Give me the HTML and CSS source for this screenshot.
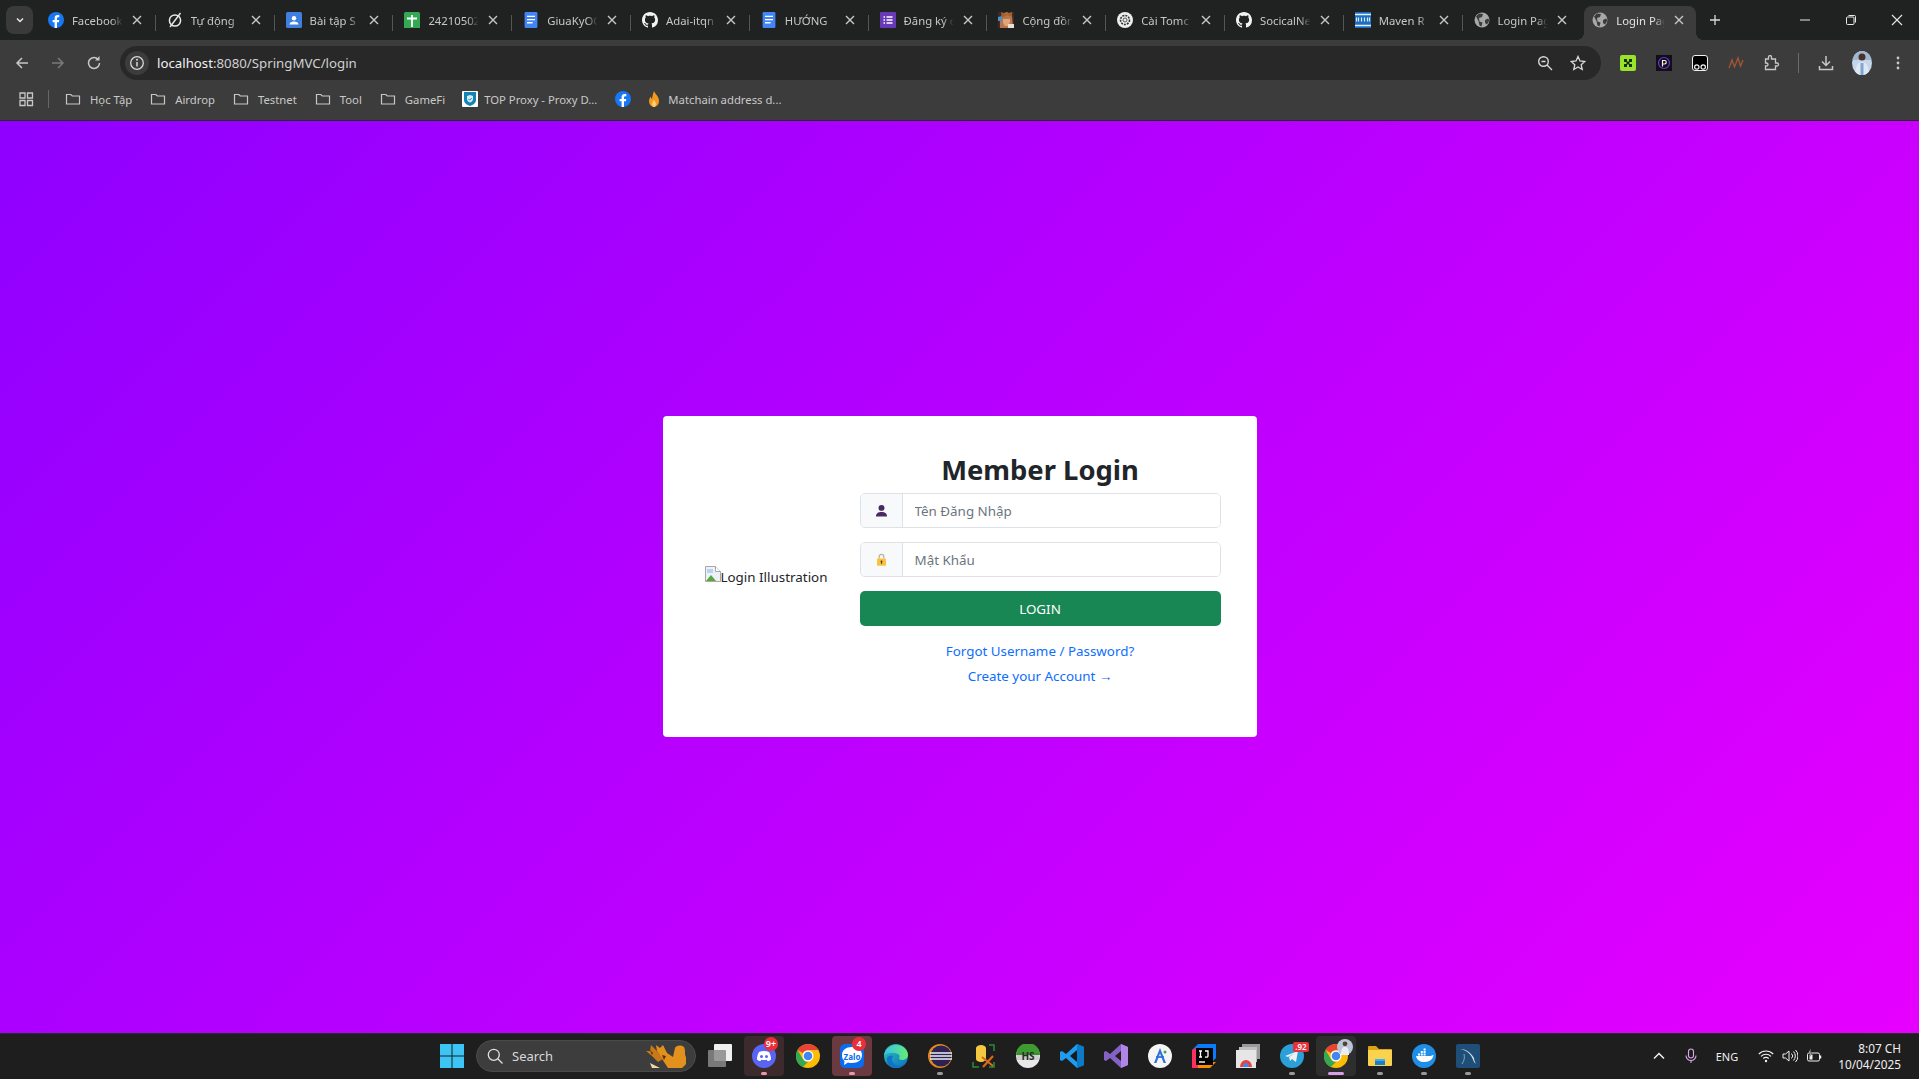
FILE: index.html
```html
<!DOCTYPE html>
<html lang="vi">
<head>
<meta charset="utf-8">
<title>Login Page</title>
<link rel="stylesheet" href="styles.css">
</head>
<body>
<svg class="defs" aria-hidden="true">
  <defs>
    <symbol id="x" viewBox="0 0 12 12"><path d="M2 2l8 8M10 2l-8 8" stroke="#c7c7c7" stroke-width="1.4" fill="none"/></symbol>
    <symbol id="fb" viewBox="0 0 16 16"><circle cx="8" cy="8" r="8" fill="#1877f2"/><path d="M10.9 10.3l.4-2.3H9V6.5c0-.7.3-1.3 1.3-1.3h1V3.2S10.400 3 9.600 3C7.800 3 6.600 4.100 6.600 6.100V8H4.600v2.300h2V16h2.400v-5.700z" fill="#fff"/></symbol>
    <symbol id="slash" viewBox="0 0 16 16"><circle cx="8" cy="8.500" r="5.600" fill="none" stroke="#e8e8e8" stroke-width="1.500"/><path d="M3 15L13.500 1" stroke="#e8e8e8" stroke-width="1.400"/></symbol>
    <symbol id="contacts" viewBox="0 0 16 16"><rect width="16" height="16" rx="1.500" fill="#3f7fe0"/><circle cx="8" cy="6.300" r="2.200" fill="#fff"/><path d="M3.500 12.500c0-2 2-3 4.500-3s4.500 1 4.500 3z" fill="#fff"/></symbol>
    <symbol id="sheets" viewBox="0 0 16 16"><rect width="16" height="18" rx="1.500" fill="#34a853"/><path d="M8 3v12M3 6.500h10" stroke="#fff" stroke-width="1.800"/></symbol>
    <symbol id="docs" viewBox="0 0 16 20"><rect width="16" height="20" rx="1.500" fill="#4285f4"/><path d="M3 5.500h10M3 9.500h10M3 13.500h7" stroke="#fff" stroke-width="1.800"/></symbol>
    <symbol id="gh" viewBox="0 0 16 16"><path fill="#f2f2f2" d="M8 0C3.580 0 0 3.580 0 8c0 3.540 2.290 6.530 5.470 7.590.400.070.550-.170.550-.380 0-.190-.010-.820-.010-1.490-2.010.370-2.530-.490-2.690-.940-.090-.230-.480-.940-.820-1.130-.280-.150-.680-.520-.010-.530.630-.010 1.080.580 1.230.820.720 1.210 1.870.870 2.330.660.070-.520.280-.870.510-1.070-1.780-.200-3.640-.890-3.640-3.950 0-.870.310-1.590.820-2.150-.080-.200-.360-1.020.080-2.120 0 0 .670-.210 2.200.820.640-.180 1.320-.270 2-.270.680 0 1.360.090 2 .270 1.530-1.040 2.200-.820 2.200-.820.440 1.100.160 1.920.080 2.120.510.560.820 1.270.820 2.150 0 3.070-1.870 3.750-3.650 3.950.290.250.540.730.540 1.480 0 1.070-.010 1.930-.010 2.200 0 .210.150.460.550.380A8.013 8.013 0 0016 8c0-4.420-3.580-8-8-8z"/></symbol>
    <symbol id="forms" viewBox="0 0 16 16"><rect width="16" height="16" rx="1" fill="#673ab7"/><path d="M6.500 5h6M6.500 8h6M6.500 11h6M3.500 5h1.500M3.500 8h1.500M3.500 11h1.500" stroke="#fff" stroke-width="1.600"/></symbol>
    <symbol id="game" viewBox="0 0 16 16"><rect width="16" height="16" fill="#3a2a2a"/><path d="M2 16V8l2-6 5-2 5 3 1 13z" fill="#b9764e"/><path d="M3 0l5 2 6-2v5L9 3 4 6z" fill="#a8612d"/><path d="M0 5l4-1v5H0z" fill="#4a90c2"/><path d="M5 7h7v3l-2 4H7L5 11z" fill="#e0a679"/><path d="M10 12h6v4h-6z" fill="#e8e0d8"/></symbol>
    <symbol id="tom" viewBox="0 0 16 16"><circle cx="8" cy="8" r="8" fill="#eee"/><circle cx="8" cy="8" r="4.500" fill="none" stroke="#333" stroke-width="1.600" stroke-dasharray="2 1"/><circle cx="8" cy="8" r="2" fill="none" stroke="#555" stroke-width="1"/></symbol>
    <symbol id="mvn" viewBox="0 0 16 16"><rect width="16" height="16" fill="#1b6fc2"/><path d="M0 2.500h16M0 13.500h16" stroke="#e8f0f8" stroke-width="1.400"/><path d="M1.500 5.500v4M3.500 5.500v4M6.500 5.500v4M9.500 5.500v4M12.500 5.500v4M14.500 5.500v4" stroke="#dfeaf5" stroke-width="1.200"/></symbol>
    <symbol id="globe" viewBox="0 0 16 16"><circle cx="8" cy="8" r="7.500" fill="#a8a8a8"/><path d="M2 4.500l3-3 4 .5-1 3-3 1 .5 3.500 3 1-1 4-2-1-1-4.500zM11 8l3-1.500 1.500 2-2.500 4-2-1.500z" fill="#3c3c3c"/></symbol>
    <symbol id="folder" viewBox="0 0 16 16"><path d="M1.500 3.500h4.300l1.500 1.500h7.200v8h-13z" fill="none" stroke="#c7c7c7" stroke-width="1.200"/></symbol>
    <symbol id="proxy" viewBox="0 0 16 16"><rect width="16" height="16" rx="1" fill="#fff"/><path d="M2 1h12v8c0 3-3 5-6 6-3-1-6-3-6-6z" fill="#1483b5"/><path d="M8 4l3 1v3c0 2-1.500 3-3 3.500C6.500 11 5 10 5 8V5z" fill="#d8eef7"/><path d="M6.500 8l1.200 1.200 2-2.200" stroke="#1483b5" fill="none"/></symbol>
    <symbol id="flame" viewBox="0 0 16 16"><path d="M8 0c1 3 5 5 5 10 0 3.500-2.500 6-5 6s-5-2.500-5-6c0-2 1-3.500 2-4.500 0 1.500.5 2 1 2.500C6.500 5 7 2.500 8 0z" fill="#f39a1e"/><path d="M8 9c1 1.500 2 2.500 2 4 0 1.500-1 3-2 3s-2-1.500-2-3c0-1.500 1-2.500 2-4z" fill="#fbd07a"/></symbol>

    <symbol id="win" viewBox="0 0 24 24"><path d="M0 0h11.500v11.500H0zM12.500 0H24v11.500H12.500zM0 12.500h11.500V24H0zM12.500 12.500H24V24H12.500z" fill="#3cc4f5"/></symbol>
    <symbol id="fox" viewBox="0 0 40 26"><path d="M38 4c-4-3-8-1-9 1l-2 9-6-4-4-8-3 3-4-3 1 6 7 11 4 6h14c4-3 7-7 4-11-2-3 0-6-2-10z" fill="#e2911c"/><path d="M10 7l-5-5-1 6-4 0 6 5 6 6 5-3z" fill="#c9781a"/><path d="M4 20l10 5H6z" fill="#f0d8a8"/><path d="M16 12l4 1-2 4zM4 7l3 3-1 2z" fill="#5a3208"/></symbol>
    <symbol id="taskview" viewBox="0 0 24 24"><rect x="6" y="0" width="18" height="17" rx="1" fill="#f0f0f0"/><rect x="0" y="6" width="18" height="17" rx="1" fill="#8a8a8a" fill-opacity=".85"/></symbol>
    <symbol id="discord" viewBox="0 0 24 24"><circle cx="12" cy="12" r="12" fill="#5865f2"/><path d="M7 8c3-1.500 7-1.500 10 0 1.500 2.500 2 5 2 7.500-1.200 1-2.500 1.500-3.500 1.500l-.8-1.300c-1.800.5-3.600.5-5.400 0L8.500 17c-1 0-2.300-.5-3.500-1.500C5 13 5.500 10.500 7 8z" fill="#fff"/><circle cx="9.500" cy="12.500" r="1.500" fill="#5865f2"/><circle cx="14.500" cy="12.500" r="1.500" fill="#5865f2"/></symbol>
    <symbol id="chrome" viewBox="0 0 24 24"><circle cx="12" cy="12" r="12" fill="#fbbc04"/><path d="M12 0a12 12 0 0110.400 6H12a6 6 0 00-5.200 3L1.600 6A12 12 0 0112 0z" fill="#ea4335"/><path d="M1.600 6l5.200 9A6 6 0 0012 18l-5.200 5A12 12 0 011.600 6z" fill="#34a853"/><circle cx="12" cy="12" r="5.500" fill="#fff"/><circle cx="12" cy="12" r="4.300" fill="#4285f4"/></symbol>
    <symbol id="zalo" viewBox="0 0 24 24"><rect width="24" height="24" rx="5" fill="#0a6cf0"/><path d="M12 3c6 0 10 3 10 8s-4 8-10 8c-1.500 0-3 0-4-.500L4 21l.5-4C2.500 15.500 2 13.500 2 11c0-5 4-8 10-8z" fill="#fff"/></symbol>
    <symbol id="edge" viewBox="0 0 24 24"><defs><linearGradient id="eg" x1="0" y1="0" x2="1" y2="1"><stop offset="0" stop-color="#2fc7b0"/><stop offset="1" stop-color="#0c6fc4"/></linearGradient><linearGradient id="eg2" x1="0" y1="0" x2="1" y2="0"><stop offset="0" stop-color="#35c1f1"/><stop offset="1" stop-color="#66eb6e"/></linearGradient></defs><circle cx="12" cy="12" r="12" fill="url(#eg)"/><path d="M0 12C1 5 6 1 12 1c6 0 12 4 12 10 0 3-3 5-6 5-2 0-3-1-3-2 1-1 1-3-1-4C9 8 3 8 0 12z" fill="url(#eg2)"/><path d="M24 15c-2 6-7 9-12 9-6 0-10-4-9-10 1-2 4-3 6-2-2 3-1 7 3 9 4 2 9 0 12-6z" fill="#1174c9"/></symbol>
    <symbol id="eclipse" viewBox="0 0 24 24"><circle cx="12" cy="12" r="12" fill="#e08a1e"/><circle cx="13" cy="12" r="10.500" fill="#2c2255"/><path d="M2 9h22M2 12h22M2 15h22" stroke="#f0f0f0" stroke-width="1.500"/></symbol>
    <symbol id="xampp" viewBox="0 0 24 24"><path d="M4 4a5 3 0 0110 0v11a5 3 0 01-10 0z" fill="#f5c842"/><path d="M17 1h5v6M1 18v5h6M17 23h5v-5" stroke="#2e8b3a" stroke-width="1.500" fill="none"/><path d="M10 13l11 9M21 12L11 23" stroke="#d9691a" stroke-width="2.200"/></symbol>
    <symbol id="hs" viewBox="0 0 24 24"><circle cx="12" cy="12" r="12" fill="#e8e8e8"/><path d="M0 11a12 12 0 0124 0z" fill="#3e9b2f"/><path d="M1 9h22v7H1z" fill="#3c3c3c" fill-opacity=".15"/></symbol>
    <symbol id="vscode" viewBox="0 0 24 24"><path d="M17 0l7 3v18l-7 3L6 14l-4 3-2-1V8l2-1 4 3z" fill="#1f9cf0"/><path d="M17 6l-7 6 7 6z" fill="#1a1a1a"/><path d="M17 0l7 3v18l-7 3z" fill="#0a7bc8"/></symbol>
    <symbol id="vs" viewBox="0 0 24 24"><path d="M17 0l7 3v18l-7 3L6 14l-4 3-2-1V8l2-1 4 3z" fill="#8661c5"/><path d="M17 7l-6 5 6 5z" fill="#1f1f1f"/><path d="M17 0l7 3v18l-7 3z" fill="#b085e8"/></symbol>
    <symbol id="astudio" viewBox="0 0 24 24"><circle cx="12" cy="12" r="12" fill="#f5f5f5"/><path d="M12 4l6 15h-2.400l-3.600-9.500L8.400 19H6z" fill="#2f6fe0"/><path d="M8 13h8" stroke="#2f6fe0" stroke-width="1.800"/><circle cx="17" cy="8" r="1.500" fill="#3aa757"/></symbol>
    <symbol id="idea" viewBox="0 0 24 24"><path d="M6 0h18v14l-4 4H0V6z" fill="#087cfa"/><path d="M0 6l6-3v21H0z" fill="#fe315d"/><path d="M18 24H6v-6h18z" fill="#fd8c00"/><rect x="4" y="4" width="17" height="17" fill="#000"/><path d="M7 18h6" stroke="#fff" stroke-width="1.400"/><path d="M7 7h3M8.500 7v6M7 13h3M13 7h3v5c0 1-1 1.500-3 1" stroke="#fff" stroke-width="1.300" fill="none"/></symbol>
    <symbol id="capps" viewBox="0 0 24 24"><rect x="6" y="0" width="18" height="15" fill="#9a9a9a"/><rect x="3" y="3" width="18" height="15" fill="#c0c0c0"/><rect x="0" y="6" width="20" height="18" fill="#e6e6e6"/><path d="M4 23a6 7 0 0112 0z" fill="#ea4335"/><path d="M7 23a3 4 0 016 0z" fill="#4285f4"/></symbol>
    <symbol id="tele" viewBox="0 0 24 24"><circle cx="12" cy="12" r="12" fill="#2a9fd8"/><path d="M5 12l13-5-2 11-4-3-2 2-1-4 6-4-7 4z" fill="#f0f0f0"/></symbol>
    <symbol id="filefolder" viewBox="0 0 24 24"><path d="M0 3a1 1 0 011-1h7l3 3h12a1 1 0 011 1v3H0z" fill="#d9a514"/><path d="M0 6h24v15a1 1 0 01-1 1H1a1 1 0 01-1-1z" fill="#fbd24e"/><path d="M7 15h10v6H7z" fill="#1a7fd0"/><path d="M7 15h10v2H7z" fill="#3ab0f0"/></symbol>
    <symbol id="docker" viewBox="0 0 24 24"><circle cx="12" cy="12" r="12" fill="#1d8fe8"/><path d="M4 12h15c1-1 2-1 2.500-1-.5 4-3.500 7-9 7-4.500 0-7.500-2-8.500-6z" fill="#fff"/><path d="M6 9.500h2v2H6zM8.800 9.500h2v2h-2zM11.600 9.500h2v2h-2zM8.800 7h2v2h-2zM11.600 7h2v2h-2zM11.600 4.500h2v2h-2z" fill="#fff"/></symbol>
    <symbol id="mysql" viewBox="0 0 24 24"><rect width="24" height="24" rx="2" fill="#1f4f78"/><path d="M4 5c6 1 11 4 14 13l2 2c-1-2-2-4-2-6-2-4-7-9-14-9z" fill="#cfe0ec"/><path d="M6 20c2-3 3-6 2-10" stroke="#7fa6c2" fill="none"/></symbol>
  </defs>
</svg>

<div class="window">
  <header class="tabstrip">
    <button class="tabsearch"><svg class="ic10" viewBox="0 0 10 10"><path d="M2 3.500l3 3 3-3" stroke="#e8e8e8" stroke-width="1.500" fill="none"/></svg></button>
    <div class="tabs">
      <div class="tab"><svg class="fav"><use href="#fb"/></svg><span class="tab-title">Facebook</span><svg class="close"><use href="#x"/></svg></div>
      <div class="tab"><svg class="fav"><use href="#slash"/></svg><span class="tab-title">Tự động</span><svg class="close"><use href="#x"/></svg></div>
      <div class="tab"><svg class="fav"><use href="#contacts"/></svg><span class="tab-title">Bài tập S</span><svg class="close"><use href="#x"/></svg></div>
      <div class="tab"><svg class="fav"><use href="#sheets"/></svg><span class="tab-title">24210502</span><svg class="close"><use href="#x"/></svg></div>
      <div class="tab"><svg class="fav"><use href="#docs"/></svg><span class="tab-title">GiuaKyOO</span><svg class="close"><use href="#x"/></svg></div>
      <div class="tab"><svg class="fav"><use href="#gh"/></svg><span class="tab-title">Adai-itqn</span><svg class="close"><use href="#x"/></svg></div>
      <div class="tab"><svg class="fav"><use href="#docs"/></svg><span class="tab-title">HƯỚNG</span><svg class="close"><use href="#x"/></svg></div>
      <div class="tab"><svg class="fav"><use href="#forms"/></svg><span class="tab-title">Đăng ký c</span><svg class="close"><use href="#x"/></svg></div>
      <div class="tab"><svg class="fav"><use href="#game"/></svg><span class="tab-title">Cộng đồn</span><svg class="close"><use href="#x"/></svg></div>
      <div class="tab"><svg class="fav"><use href="#tom"/></svg><span class="tab-title">Cài Tomc</span><svg class="close"><use href="#x"/></svg></div>
      <div class="tab"><svg class="fav"><use href="#gh"/></svg><span class="tab-title">SocicalNe</span><svg class="close"><use href="#x"/></svg></div>
      <div class="tab"><svg class="fav"><use href="#mvn"/></svg><span class="tab-title">Maven R</span><svg class="close"><use href="#x"/></svg></div>
      <div class="tab tab-last"><svg class="fav"><use href="#globe"/></svg><span class="tab-title">Login Pag</span><svg class="close"><use href="#x"/></svg></div>
      <div class="tab tab-active"><svg class="fav"><use href="#globe"/></svg><span class="tab-title">Login Pag</span><svg class="close"><use href="#x"/></svg></div>
    </div>
    <svg class="newtab" viewBox="0 0 12 12"><path d="M6 1v10M1 6h10" stroke="#dadada" stroke-width="1.300"/></svg>
    <div class="winctl">
      <svg class="winbtn" viewBox="0 0 12 12"><path d="M1 6h10" stroke="#e8e8e8"/></svg>
      <svg class="winbtn" viewBox="0 0 12 12"><rect x="1.500" y="3" width="7.500" height="7.500" rx="1" fill="none" stroke="#e8e8e8"/><path d="M3.500 1.500h6a1 1 0 011 1v6" fill="none" stroke="#e8e8e8"/></svg>
      <svg class="winbtn" viewBox="0 0 12 12"><path d="M1 1l10 10M11 1L1 11" stroke="#e8e8e8" stroke-width="1.100"/></svg>
    </div>
  </header>

  <nav class="toolbar">
    <button class="navbtn"><svg class="ic16" viewBox="0 0 16 16"><path d="M14 8H3M8 3L3 8l5 5" stroke="#c7c7c7" stroke-width="1.500" fill="none"/></svg></button>
    <button class="navbtn"><svg class="ic16" viewBox="0 0 16 16"><path d="M2 8h11M8 3l5 5-5 5" stroke="#7a7a7a" stroke-width="1.500" fill="none"/></svg></button>
    <button class="navbtn"><svg class="ic16" viewBox="0 0 16 16"><path d="M13.500 8A5.500 5.500 0 112.500 8 5.500 5.500 0 0112 4.300" stroke="#c7c7c7" stroke-width="1.500" fill="none"/><path d="M13.500 1v4.500H9" fill="#c7c7c7"/></svg></button>
    <div class="omnibox">
      <span class="infochip"><svg class="ic16" viewBox="0 0 16 16"><circle cx="8" cy="8" r="6.300" fill="none" stroke="#d8d8d8" stroke-width="1.300"/><path d="M8 7v4.500" stroke="#d8d8d8" stroke-width="1.500"/><circle cx="8" cy="4.800" r="1" fill="#d8d8d8"/></svg></span>
      <span class="url"><b class="url-host">localhost</b>:8080/SpringMVC/login</span>
      <svg class="ic16 omni-zoom" viewBox="0 0 16 16"><circle cx="6.500" cy="6.500" r="4.800" fill="none" stroke="#d8d8d8" stroke-width="1.400"/><path d="M4.500 6.500h4M10 10l5 5" stroke="#d8d8d8" stroke-width="1.400"/></svg>
      <svg class="ic16 omni-star" viewBox="0 0 16 16"><path d="M8 1.500l2 4.500 4.800.5-3.600 3.200 1 4.800L8 12l-4.200 2.500 1-4.800L1.200 6.500 6 6z" fill="none" stroke="#d8d8d8" stroke-width="1.300"/></svg>
    </div>
    <div class="extensions">
      <span class="ext"><svg class="ic16" viewBox="0 0 16 16"><rect width="16" height="16" rx="2" fill="#9be22d"/><path d="M4 4h3v3H4zM9 4h3v3H9zM4 9h3v3H4zM9 9h3v3H9z" fill="#16300a"/><path d="M6.500 6.500h3v3h-3z" fill="#16300a"/></svg></span>
      <span class="ext"><svg class="ic16" viewBox="0 0 16 16"><rect width="16" height="16" fill="#0f0f14"/><circle cx="8" cy="8" r="5.500" fill="none" stroke="#7a2fe0" stroke-width="1.200"/><path d="M6.500 11.500V5.500h2a1.700 1.700 0 010 3.500h-2" fill="none" stroke="#f0f0f0" stroke-width="1.200"/></svg></span>
      <span class="ext"><svg class="ic16" viewBox="0 0 16 16"><rect x=".5" y=".5" width="15" height="15" rx="2.500" fill="#000" stroke="#f0f0f0"/><circle cx="4.800" cy="12" r="2.200" fill="none" stroke="#f0f0f0" stroke-width="1.200"/><circle cx="11.200" cy="12" r="2.200" fill="none" stroke="#f0f0f0" stroke-width="1.200"/></svg></span>
      <span class="ext"><svg class="ic16" viewBox="0 0 16 16"><path d="M1 13L4 5l2.500 7L10 3l2.500 8L15 5" fill="none" stroke="#a65632" stroke-width="1.300"/></svg></span>
      <span class="ext"><svg class="ic16" viewBox="0 0 16 16"><path d="M1.500 4h3V2a1.500 1.500 0 013 0v2h4v4h1.500a1.500 1.500 0 010 3H11.500v3.500h-10V11h1a1.500 1.500 0 000-3h-1z" fill="none" stroke="#c7c7c7" stroke-width="1.300"/></svg></span>
    </div>
    <span class="toolsep"></span>
    <span class="ext"><svg class="ic16" viewBox="0 0 16 16"><path d="M8 1v9M4 6.500L8 10.500l4-4M1.500 11v3.500h13V11" fill="none" stroke="#c7c7c7" stroke-width="1.500"/></svg></span>
    <span class="ext"><svg class="avatar" viewBox="0 0 20 24"><rect width="20" height="24" fill="#c4d6e8"/><rect x="0" y="0" width="20" height="9" fill="#9fb8d0"/><circle cx="10" cy="6" r="3.500" fill="#4a3228"/><path d="M3 24c0-9 3-13 7-13s7 4 7 13z" fill="#dfe7f3"/><path d="M10 12v12" stroke="#7ea6d2" stroke-width="3"/></svg></span>
    <span class="ext"><svg class="ic16" viewBox="0 0 16 16"><circle cx="8" cy="3" r="1.400" fill="#c7c7c7"/><circle cx="8" cy="8" r="1.400" fill="#c7c7c7"/><circle cx="8" cy="13" r="1.400" fill="#c7c7c7"/></svg></span>
  </nav>

  <nav class="bookmarks">
    <svg class="ic16 bm-apps" viewBox="0 0 16 16"><path d="M2 2h5v5H2zM9.500 2h5v5h-5zM2 9.500h5v5H2zM9.500 9.500h5v5h-5z" fill="none" stroke="#c7c7c7" stroke-width="1.300"/></svg>
    <span class="bm-sep"></span>
    <a class="bm"><svg class="ic16"><use href="#folder"/></svg>Học Tập</a>
    <a class="bm"><svg class="ic16"><use href="#folder"/></svg>Airdrop</a>
    <a class="bm"><svg class="ic16"><use href="#folder"/></svg>Testnet</a>
    <a class="bm"><svg class="ic16"><use href="#folder"/></svg>Tool</a>
    <a class="bm"><svg class="ic16"><use href="#folder"/></svg>GameFi</a>
    <a class="bm bm-tight"><svg class="ic16"><use href="#proxy"/></svg>TOP Proxy - Proxy D...</a>
    <a class="bm bm-icon"><svg class="ic16"><use href="#fb"/></svg></a>
    <a class="bm bm-tight"><svg class="ic16"><use href="#flame"/></svg>Matchain address d...</a>
  </nav>

  <main class="page">
    <section class="card">
      <div class="illustration">
        <svg class="broken" viewBox="0 0 16 16"><path d="M.5.5h10l5 5v10H.5z" fill="#eef1f6" stroke="#a8a8a8"/><path d="M10.500.5v5h5" fill="#fff" stroke="#a8a8a8"/><path d="M1 15l5-6 5 6z" fill="#5aa83c"/><path d="M2 3h6v4H2z" fill="#b8d4f4"/></svg><span>Login Illustration</span>
      </div>
      <form class="login">
        <h2 class="title">Member Login</h2>
        <div class="field">
          <span class="addon"><svg class="addon-ic" viewBox="0 0 14 14"><circle cx="7" cy="4.200" r="3.200" fill="#4b2a63"/><path d="M1 13.500c0-3.500 2.500-5 6-5s6 1.500 6 5z" fill="#4b2a63"/></svg></span>
          <input class="input" type="text" placeholder="Tên Đăng Nhập">
        </div>
        <div class="field">
          <span class="addon"><svg class="addon-ic" viewBox="0 0 14 14"><path d="M4.500 6V4a2.500 2.500 0 015 0v2" fill="none" stroke="#b9b4a6" stroke-width="1.400"/><rect x="2.200" y="5.800" width="9.600" height="8" rx="1" fill="#f9c23c"/><circle cx="7" cy="9.200" r="1" fill="#4b3a10"/><path d="M7 9.500v2.200" stroke="#4b3a10"/></svg></span>
          <input class="input" type="password" placeholder="Mật Khẩu">
        </div>
        <button class="submit" type="button">LOGIN</button>
        <a class="link link-first">Forgot Username / Password?</a>
        <a class="link">Create your Account →</a>
      </form>
    </section>
  </main>

  <footer class="taskbar">
    <div class="task-item"><svg class="tb-ic"><use href="#win"/></svg></div>
    <div class="search">
      <svg class="search-ic" viewBox="0 0 16 16"><circle cx="6.800" cy="6.800" r="5.500" fill="none" stroke="#e0e0e0" stroke-width="1.300"/><path d="M11 11l4.500 4.500" stroke="#e0e0e0" stroke-width="1.300"/></svg>
      <span class="search-text">Search</span>
      <svg class="fox"><use href="#fox"/></svg>
    </div>
    <div class="task-item task-view"><svg class="tb-ic"><use href="#taskview"/></svg></div>
    <div class="task-item task-tint"><svg class="tb-ic"><use href="#discord"/></svg><span class="badge badge-round">9+</span><span class="dot dot-pink"></span></div>
    <div class="task-item"><svg class="tb-ic"><use href="#chrome"/></svg></div>
    <div class="task-item task-tint-strong"><svg class="tb-ic"><use href="#zalo"/></svg><span class="zalo-label">Zalo</span><span class="badge badge-round">4</span><span class="dot dot-pink"></span></div>
    <div class="task-item"><svg class="tb-ic"><use href="#edge"/></svg></div>
    <div class="task-item"><svg class="tb-ic"><use href="#eclipse"/></svg><span class="dot"></span></div>
    <div class="task-item"><svg class="tb-ic"><use href="#xampp"/></svg></div>
    <div class="task-item"><svg class="tb-ic"><use href="#hs"/></svg><span class="hs-label">HS</span></div>
    <div class="task-item"><svg class="tb-ic"><use href="#vscode"/></svg></div>
    <div class="task-item"><svg class="tb-ic"><use href="#vs"/></svg></div>
    <div class="task-item"><svg class="tb-ic"><use href="#astudio"/></svg></div>
    <div class="task-item"><svg class="tb-ic"><use href="#idea"/></svg></div>
    <div class="task-item"><svg class="tb-ic"><use href="#capps"/></svg></div>
    <div class="task-item"><svg class="tb-ic"><use href="#tele"/></svg><span class="badge badge-rect">.92</span><span class="dot"></span></div>
    <div class="task-item task-active"><svg class="tb-ic tb-big"><use href="#chrome"/></svg><svg class="mini-avatar" viewBox="0 0 20 20"><circle cx="10" cy="10" r="10" fill="#b8c6d6"/><circle cx="10" cy="6" r="3" fill="#5a4034"/><path d="M5 20c0-8 2-10 5-10s5 2 5 10z" fill="#e8edf5"/></svg><span class="dot dot-active"></span></div>
    <div class="task-item"><svg class="tb-ic"><use href="#filefolder"/></svg><span class="dot"></span></div>
    <div class="task-item"><svg class="tb-ic"><use href="#docker"/></svg><span class="dot"></span></div>
    <div class="task-item"><svg class="tb-ic"><use href="#mysql"/></svg><span class="dot"></span></div>

    <div class="tray">
      <svg class="tray-ic" viewBox="0 0 16 16"><path d="M3 10.500L8 5.500l5 5" fill="none" stroke="#f0f0f0" stroke-width="1.500"/></svg>
      <svg class="tray-ic" viewBox="0 0 16 16"><rect x="5.500" y="1" width="5" height="9" rx="2.500" fill="none" stroke="#d8a8e8" stroke-width="1.100"/><path d="M3 7.500a5 5 0 0010 0M8 12.500V15" fill="none" stroke="#d8a8e8" stroke-width="1.100"/></svg>
      <span class="lang">ENG</span>
      <svg class="tray-ic" viewBox="0 0 16 16"><path d="M.8 6a10 10 0 0114.400 0M3 8.300a7 7 0 0110 0M5.300 10.500a3.800 3.800 0 015.400 0" fill="none" stroke="#f0f0f0" stroke-width="1.100"/><circle cx="8" cy="13" r="1.200" fill="#f0f0f0"/></svg>
      <svg class="tray-ic" viewBox="0 0 16 16"><path d="M1 6h2.500L7 3v10L3.500 10H1z" fill="none" stroke="#f0f0f0"/><path d="M9.500 5.500a3.500 3.500 0 010 5M11.500 3.500a6.500 6.500 0 010 9M13.500 2a8.500 8.500 0 010 12" fill="none" stroke="#f0f0f0"/></svg>
      <svg class="tray-ic" viewBox="0 0 16 16"><rect x="1.500" y="5" width="12" height="8" rx="1.500" fill="none" stroke="#f0f0f0"/><path d="M14.500 7.500v3" stroke="#f0f0f0" stroke-width="1.500"/><path d="M3 6.500h7v5H3z" fill="#1e1e1e"/><path d="M3.500 6.500h3v5h-3z" fill="#f0f0f0"/><path d="M4.500 .5L2.500 5h3L4 8.500" fill="#f0f0f0" stroke="#1e1e1e" stroke-width=".5"/></svg>
      <div class="clock"><span>8:07 CH</span><span>10/04/2025</span></div>
    </div>
  </footer>
</div>
</body>
</html>
```
FILE: styles.css
```css
* { box-sizing: border-box; }
html, body { margin: 0; padding: 0; height: 100%; overflow: hidden; }
body { font-family: "Noto Sans", "Open Sans", sans-serif; background: #202124; }
.defs { position: absolute; width: 0; height: 0; }
button { border: 0; background: none; padding: 0; font: inherit; }
svg { display: block; flex: none; }
.window { display: flex; flex-direction: column; height: 1079px; }

/* tab strip */
.tabstrip { height: 40px; background: #202222; display: flex; align-items: flex-end; flex: none; }
.tabsearch { width: 27px; height: 28px; margin: 0 7px 6px 6px; background: #3a3a3a; border-radius: 8px; display: flex; align-items: center; justify-content: center; }
.ic10 { width: 10px; height: 10px; }
.tabs { display: flex; }
.tab { width: 118.8px; height: 34px; padding: 0 16px 6px 8px; display: flex; align-items: center; position: relative; color: #c7c7c7; font-size: 11.3px; }
.tab::after { content: ""; position: absolute; right: 3px; top: 9px; height: 16px; width: 1px; background: #555; }
.tab-last::after { display: none; }
.tab-active { width: 112px; background: #3c3c3c; border-radius: 8px 8px 0 0; padding-right: 11px; color: #e3e3e3; }
.tab-active::before { content: ""; position: absolute; left: -8px; bottom: 0; width: 8px; height: 8px; background: radial-gradient(circle at 0 0, transparent 8px, #3c3c3c 8px); }
.tab-active::after { right: -8px; top: auto; bottom: 0; width: 8px; height: 8px; background: radial-gradient(circle at 100% 0, transparent 8px, #3c3c3c 8px); }
.fav { width: 16px; height: 16px; margin-right: 8px; }
.tab-title { flex: 1; min-width: 0; white-space: nowrap; overflow: hidden; -webkit-mask-image: linear-gradient(90deg, #000 72%, transparent 92%); mask-image: linear-gradient(90deg, #000 72%, transparent 92%); }
.close { width: 12px; height: 12px; margin-left: 4px; }
.newtab { width: 12px; height: 12px; margin: 0 0 14px 13px; }
.winctl { margin-left: auto; display: flex; align-self: stretch; align-items: center; padding-right: 16px; gap: 34px; }
.winbtn { width: 12px; height: 12px; }

/* toolbar */
.toolbar { height: 44px; padding: 2px 2px 0 4px; background: #3c3c3c; display: flex; align-items: center; flex: none; }
.navbtn { width: 36px; height: 36px; display: flex; align-items: center; justify-content: center; }
.ic16 { width: 16px; height: 16px; }
.omnibox { width: 1481px; height: 34px; margin-left: 8px; background: #282828; border-radius: 17px; display: flex; align-items: center; padding-left: 5px; padding-right: 15px; color: #d0d0d0; font-size: 13.25px; }
.infochip { width: 24px; height: 24px; border-radius: 50%; background: #3c3c3c; display: flex; align-items: center; justify-content: center; margin-right: 8px; }
.url { flex: 1; white-space: nowrap; }
.url-host { font-weight: 400; color: #f1f1f1; }
.omni-zoom { margin-right: 17px; }
.extensions { display: flex; margin-left: 9px; }
.ext { width: 36px; height: 36px; display: flex; align-items: center; justify-content: center; }
.toolsep { width: 1px; height: 20px; background: #6a6a6a; margin: 0 9px 0 8px; }
.avatar { width: 20px; height: 24px; border-radius: 50%; }

/* bookmarks */
.bookmarks { height: 36px; padding: 0 0 6px 18px; background: #3c3c3c; display: flex; align-items: center; flex: none; color: #c9c9c9; font-size: 11.3px; }
.bm-sep { width: 1px; height: 18px; background: #666; margin: 0 16px 0 14px; }
.bm { display: flex; align-items: center; gap: 9px; margin-right: 18px; white-space: nowrap; }
.bm-tight { gap: 6px; margin-left: -1px; }
.bm-icon { margin-right: 16px; }

/* page */
.page { flex: 1; min-height: 0; padding-bottom: 2px; border-top: 1px solid #2a2a2a; background: linear-gradient(135deg, #8f00ff, #e600ff); display: flex; align-items: center; justify-content: center; }
.card { width: 594px; height: 321px; background: #fff; border-radius: 4px; display: flex; align-items: center; padding: 0 36px 0 42px; color: #212529; font-size: 13.4px; }
.illustration { width: 155px; display: flex; align-items: flex-end; flex: none; white-space: nowrap; }
.broken { width: 16px; height: 16px; margin-bottom: 4px; }
.login { flex: 1; display: flex; flex-direction: column; align-items: stretch; padding-bottom: 10px; }
.title { margin: 0 0 6px; font-size: 27.4px; line-height: 34px; font-weight: 700; text-align: center; }
.field { display: flex; height: 35px; margin-bottom: 14px; border: 1px solid #dee2e6; border-radius: 5px; overflow: hidden; }
.addon { width: 42px; background: #f8f9fa; border-right: 1px solid #dee2e6; display: flex; align-items: center; justify-content: center; }
.addon-ic { width: 13px; height: 13px; }
.input { flex: 1; min-width: 0; border: 0; outline: 0; padding: 0 12px; font: inherit; background: #fff; }
.input::placeholder { color: #6c757d; opacity: 1; }
.submit { height: 35px; background: #198754; color: #fff; border-radius: 5px; font-size: 13.4px; }
.link { display: block; text-align: center; color: #0d6efd; height: 25px; line-height: 25px; }
.link-first { margin-top: 13px; }

/* taskbar */
.taskbar { height: 46px; padding: 0 0 1px 430px; background: #1e1e1e; display: flex; align-items: center; flex: none; border-top: 1px solid #2c2c2c; color: #f0f0f0; }
.task-item { width: 40px; height: 40px; margin: 0 2px; display: flex; align-items: center; justify-content: center; position: relative; border-radius: 4px; }
.tb-ic { width: 24px; height: 24px; }
.tb-big { width: 24px; height: 24px; }
.task-tint { background: #3c2a2d; }
.task-tint-strong { background: #6a3a40; }
.task-active { background: #2e2e2e; }
.task-view { margin-left: 4px; }
.search { width: 220px; height: 32px; margin-left: 2px; border-radius: 16px; background: #3d3d3d; border: 1px solid #4a4a4a; display: flex; align-items: center; padding-left: 10px; }
.search-ic { width: 16px; height: 16px; margin-right: 9px; }
.search-text { font-size: 13px; color: #d8d8d8; flex: 1; }
.fox { width: 40px; height: 26px; margin-right: 9px; }
.badge { position: absolute; color: #fff; font-size: 9px; font-weight: 600; line-height: 14px; text-align: center; background: #e8303a; }
.badge-round { width: 14px; height: 14px; border-radius: 50%; right: 6px; top: 1px; line-height: 14px; }
.badge-rect { width: 16px; height: 10px; line-height: 10px; right: 3px; top: 6px; border-radius: 2px; font-size: 8px; }
.dot { position: absolute; bottom: 1px; left: 50%; width: 6px; height: 3px; margin-left: -3px; border-radius: 2px; background: #9a9a9a; }
.dot-pink { background: #e89aa8; }
.dot-active { width: 16px; margin-left: -8px; background: #d8a0e8; }
.hs-label { position: absolute; font-size: 10px; font-weight: 700; color: #2a2a2a; }
.zalo-label { position: absolute; font-size: 8px; font-weight: 700; color: #0a6cf0; }
.mini-avatar { position: absolute; width: 16px; height: 16px; right: 3px; top: 3px; }
.tray { margin-left: auto; display: flex; align-items: center; height: 100%; padding-right: 18px; }
.tray-ic { width: 16px; height: 16px; }
.tray-ic:nth-of-type(1) { margin-right: 16px; }
.lang { font-size: 11px; margin: 0 20px 0 17px; }
.tray-ic:nth-of-type(3) { margin-right: 8px; }
.tray-ic:nth-of-type(4) { margin-right: 8px; }
.clock { display: flex; flex-direction: column; align-items: flex-end; font-size: 11.8px; line-height: 16px; margin-left: 16px; }
```
